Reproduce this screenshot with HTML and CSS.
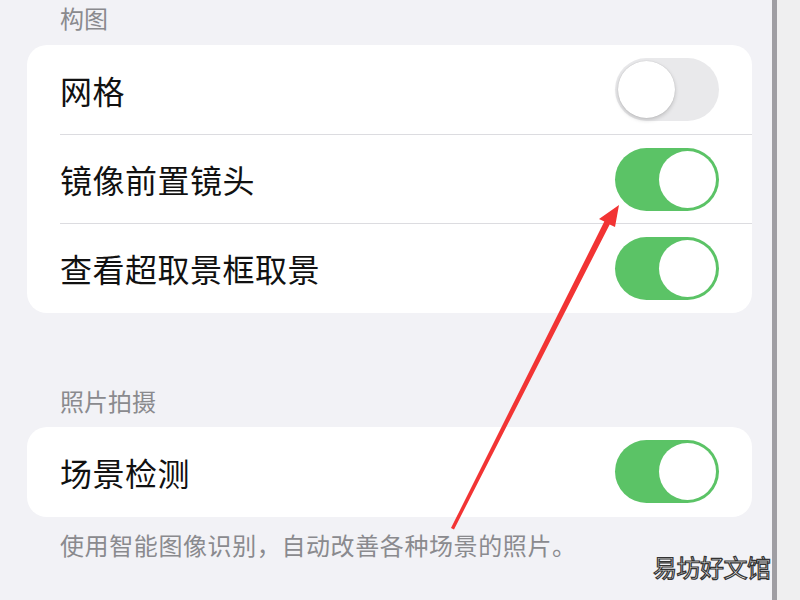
FILE: index.html
```html
<!DOCTYPE html>
<html lang="zh-CN">
<head>
    <meta charset="UTF-8">
    <meta name="viewport" content="width=device-width, initial-scale=1.0">
    <title>相机设置</title>
    <link rel="stylesheet" href="styles.css">
</head>
<body>
    <div class="page">
        <div class="screen">
            <div class="group-title">构图</div>
            <div class="card">
                <div class="row">
                    <span class="row-label">网格</span>
                    <span class="switch"><i></i></span>
                </div>
                <div class="row">
                    <span class="row-label">镜像前置镜头</span>
                    <span class="switch on"><i></i></span>
                </div>
                <div class="row">
                    <span class="row-label">查看超取景框取景</span>
                    <span class="switch on"><i></i></span>
                </div>
            </div>

            <div class="group-title group-gap">照片拍摄</div>
            <div class="card">
                <div class="row">
                    <span class="row-label">场景检测</span>
                    <span class="switch on"><i></i></span>
                </div>
            </div>
            <div class="group-foot">使用智能图像识别，自动改善各种场景的照片。</div>
        </div>
        <div class="edge"></div>
        <div class="side"></div>
    </div>

    <!-- 红色箭头标注 -->
    <svg class="arrow" width="800" height="600" viewBox="0 0 800 600">
        <polygon points="451,528 604.3,221.6 599,219 619,205 615,227 609.7,224.4 454,529.5" fill="#f23434"/>
    </svg>

    <!-- 水印 -->
    <div class="mark">易坊好文馆</div>
</body>
</html>
```

FILE: styles.css
```css
*{
    margin: 0;
    padding: 0;
    box-sizing: border-box;
}
body{
    width: 800px;
    height: 600px;
    overflow: hidden;
    background: #f2f2f6;
    font-family: "Noto Sans CJK SC", "Noto Sans", sans-serif;
    position: relative;
}

.page{
    display: flex;
    height: 600px;
}
.screen{
    width: 772px;
    padding-left: 27px;
    padding-right: 20px;
}
.edge{
    width: 5px;
    background: #9f9ea3;
}
.side{
    flex: 1;
    background: #efeff0;
}

.group-title{
    padding-left: 33px;
    font-size: 24px;
    line-height: 36px;
    height: 36px;
    color: #8a8a8e;
    margin-bottom: 9px;
}
.group-gap{
    margin-top: 70px;
    margin-bottom: 8px;
}
.group-foot{
    padding-left: 33px;
    margin-top: 10px;
    font-size: 24px;
    line-height: 36px;
    color: #8a8a8e;
    letter-spacing: 0.6px;
}

.card{
    background: #ffffff;
    border-radius: 20px;
    padding-left: 33px;
    padding-bottom: 1px;
}
.row{
    height: 89px;
    display: flex;
    align-items: center;
    justify-content: space-between;
    padding-right: 33px;
    border-top: 1px solid #dcdce0;
}
.row:first-child{
    border-top: none;
}
.row-label{
    font-size: 32px;
    color: #111111;
    letter-spacing: 0.5px;
}

/* 开关 */
.switch{
    width: 104px;
    height: 63px;
    border-radius: 32px;
    background: #e9e9eb;
    display: flex;
    align-items: center;
    padding: 3px;
}
.switch i{
    width: 57px;
    height: 57px;
    border-radius: 50%;
    background: #ffffff;
    box-shadow: 0 2px 4px rgba(0, 0, 0, 0.18), 0 0 1px rgba(0, 0, 0, 0.2);
}
.switch.on{
    background: #5bc366;
    justify-content: flex-end;
}
.switch.on i{
    box-shadow: none;
}

.arrow{
    position: absolute;
    left: 0;
    top: 0;
}

.mark{
    position: absolute;
    left: 653px;
    top: 551px;
    font-size: 24px;
    line-height: 32px;
    color: #f4f4f4;
    -webkit-text-stroke: 1.2px #333333;
    letter-spacing: -0.5px;
}
```
